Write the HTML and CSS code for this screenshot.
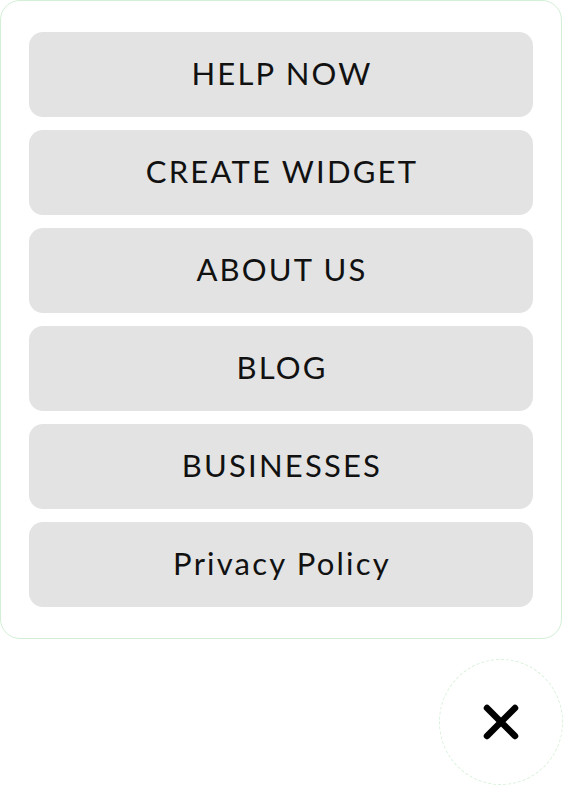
FILE: index.html
```html
<!DOCTYPE html>
<html lang="en">
<head>
<meta charset="utf-8">
<title>Menu</title>
<link rel="stylesheet" href="styles.css">
</head>
<body>
<nav class="menu-card">
  <a class="menu-item" href="#">HELP NOW</a>
  <a class="menu-item" href="#">CREATE WIDGET</a>
  <a class="menu-item" href="#">ABOUT US</a>
  <a class="menu-item" href="#">BLOG</a>
  <a class="menu-item" href="#">BUSINESSES</a>
  <a class="menu-item" href="#">Privacy Policy</a>
</nav>
<div class="close-row">
  <button class="close-btn" aria-label="Close">
    <svg class="close-icon" viewBox="0 0 36 36" width="36" height="36">
      <path d="M4 4 L32 32 M32 4 L4 32" stroke="#000" stroke-width="6.5" stroke-linecap="round" fill="none"/>
    </svg>
  </button>
</div>
</body>
</html>
```
FILE: styles.css
```css
html, body {
  margin: 0;
  padding: 0;
  background: #ffffff;
}
body {
  width: 564px;
  height: 786px;
  overflow: hidden;
  font-family: "Lato", "DejaVu Sans", sans-serif;
}
.menu-card {
  box-sizing: border-box;
  width: 562px;
  height: 639px;
  border: 1px solid #d3efd6;
  border-radius: 20px;
  padding: 31px 28px;
  display: flex;
  flex-direction: column;
  gap: 13px;
  background: #fff;
}
.menu-item {
  box-sizing: border-box;
  height: 85px;
  flex: 0 0 85px;
  padding-bottom: 3px;
  padding-left: 2px;
  border-radius: 14px;
  background: #e3e3e3;
  display: flex;
  align-items: center;
  justify-content: center;
  color: #111;
  text-decoration: none;
  font-size: 31px;
  letter-spacing: 2.2px;
  font-weight: 400;
}
.close-row {
  display: flex;
  justify-content: flex-end;
  margin-top: 20px;
  padding-right: 1px;
}
.close-btn {
  box-sizing: border-box;
  width: 124px;
  height: 126px;
  border-radius: 50%;
  border: 1px dashed #d8f1da;
  background: #fff;
  padding: 0;
  display: flex;
  align-items: center;
  justify-content: center;
}
.close-icon {
  display: block;
}
```
